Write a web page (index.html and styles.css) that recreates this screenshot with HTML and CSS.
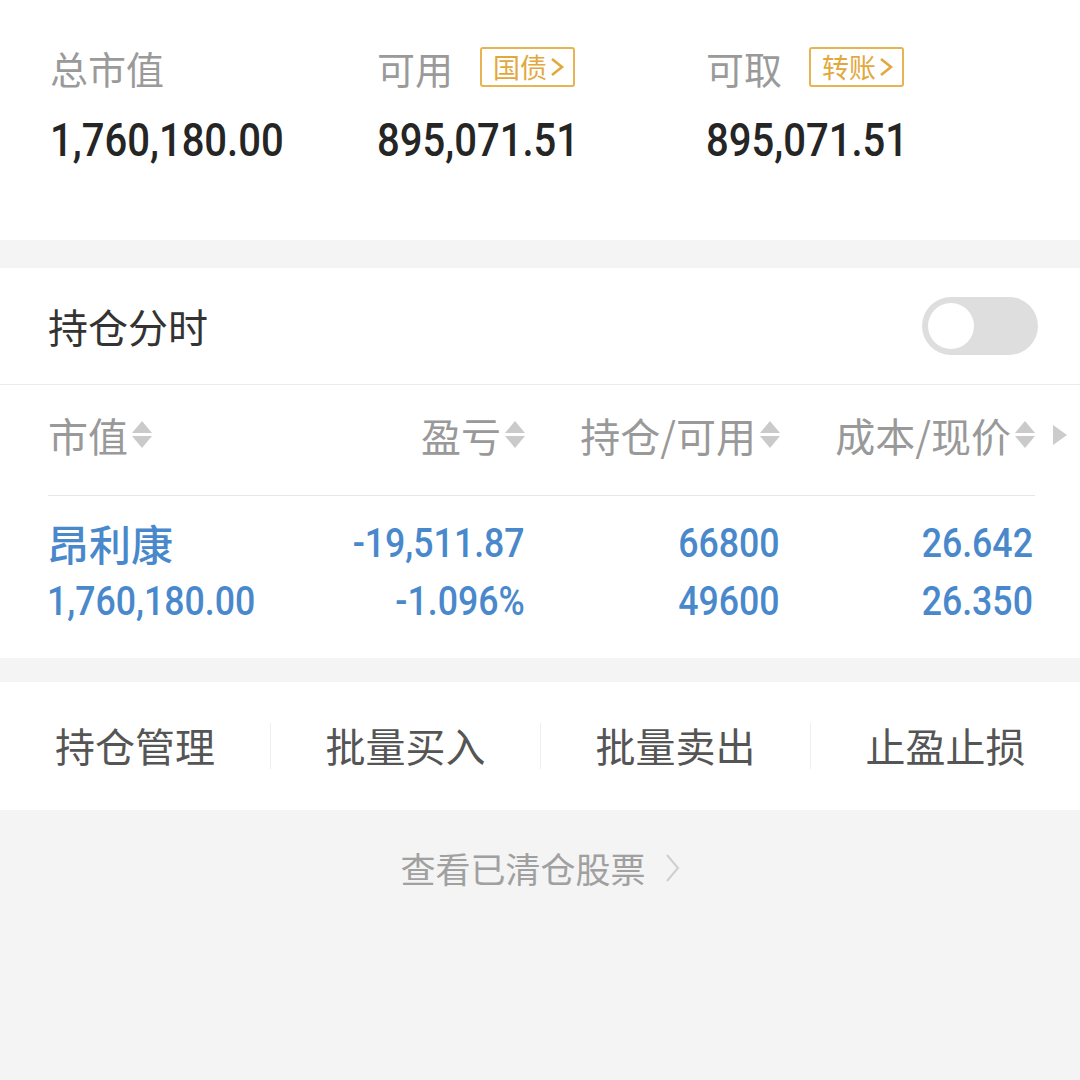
FILE: index.html
```html
<!DOCTYPE html>
<html lang="zh-CN">
<head>
<meta charset="utf-8">
<title>持仓</title>
<link rel="stylesheet" href="styles.css">
</head>
<body>
<div class="page">
  <section class="assets">
    <div class="asset">
      <div class="asset-label"><span>总市值</span></div>
      <div class="asset-value"><span class="num">1,760,180.00</span></div>
    </div>
    <div class="asset">
      <div class="asset-label"><span>可用</span>
        <span class="badge">国债<svg class="badge-arrow" viewBox="0 0 16 22" width="16" height="22"><polyline points="3,3 13,11 3,19" fill="none" stroke="currentColor" stroke-width="2.6" stroke-linejoin="miter"/></svg></span>
      </div>
      <div class="asset-value"><span class="num">895,071.51</span></div>
    </div>
    <div class="asset">
      <div class="asset-label"><span>可取</span>
        <span class="badge">转账<svg class="badge-arrow" viewBox="0 0 16 22" width="16" height="22"><polyline points="3,3 13,11 3,19" fill="none" stroke="currentColor" stroke-width="2.6" stroke-linejoin="miter"/></svg></span>
      </div>
      <div class="asset-value"><span class="num">895,071.51</span></div>
    </div>
  </section>

  <section class="holdings">
    <div class="switch-row">
      <span class="switch-label">持仓分时</span>
      <span class="toggle"><span class="knob"></span></span>
    </div>

    <div class="thead">
      <div class="th th-left">市值<svg class="sort" viewBox="0 0 20 30" width="20" height="30"><polygon points="0,13 10,1 20,13"/><polygon points="0,16 20,16 10,28"/></svg></div>
      <div class="th">盈亏<svg class="sort" viewBox="0 0 20 30" width="20" height="30"><polygon points="0,13 10,1 20,13"/><polygon points="0,16 20,16 10,28"/></svg></div>
      <div class="th">持仓/可用<svg class="sort" viewBox="0 0 20 30" width="20" height="30"><polygon points="0,13 10,1 20,13"/><polygon points="0,16 20,16 10,28"/></svg></div>
      <div class="th">成本/现价<svg class="sort" viewBox="0 0 20 30" width="20" height="30"><polygon points="0,13 10,1 20,13"/><polygon points="0,16 20,16 10,28"/></svg></div>
      <div class="th-more"><svg viewBox="0 0 14 20" width="14" height="20"><polygon points="0,0 14,10 0,20"/></svg></div>
    </div>
    <div class="divider"></div>

    <div class="trow">
      <div class="cell cell-left">
        <div class="stock-name">昂利康</div>
        <div class="line"><span class="num">1,760,180.00</span></div>
      </div>
      <div class="cell">
        <div class="line"><span class="num num-r">-19,511.87</span></div>
        <div class="line"><span class="num num-r">-1.096%</span></div>
      </div>
      <div class="cell">
        <div class="line"><span class="num num-r">66800</span></div>
        <div class="line"><span class="num num-r">49600</span></div>
      </div>
      <div class="cell">
        <div class="line"><span class="num num-r">26.642</span></div>
        <div class="line"><span class="num num-r">26.350</span></div>
      </div>
    </div>
  </section>

  <section class="actions">
    <div class="action">持仓管理</div>
    <div class="action">批量买入</div>
    <div class="action">批量卖出</div>
    <div class="action">止盈止损</div>
  </section>

  <div class="cleared">
    <span>查看已清仓股票</span>
    <svg class="cleared-arrow" viewBox="0 0 16 30" width="16" height="30"><polyline points="3,2 14,15 3,28" fill="none" stroke="#cfcfcf" stroke-width="2"/></svg>
  </div>
</div>
</body>
</html>
```

FILE: styles.css
```css
* { box-sizing: border-box; }

html, body {
  margin: 0;
  padding: 0;
  background: #f4f4f4;
}

body {
  font-family: "Noto Sans CJK SC", "Noto Sans", sans-serif;
  color: #333;
}

.page {
  width: 1080px;
  min-height: 1080px;
  background: #f4f4f4;
}

.num {
  display: inline-block;
  font-family: Roboto, "Liberation Sans", sans-serif;
  transform: scaleX(0.87);
  transform-origin: left center;
  white-space: nowrap;
}

.num-r {
  transform-origin: right center;
}

/* ---------- assets ---------- */
.assets {
  background: #fff;
  height: 240px;
  padding: 43px 0 0 50px;
  display: grid;
  grid-template-columns: 327px 329px 1fr;
}

.asset-label {
  height: 50px;
  display: flex;
  align-items: center;
  font-size: 38px;
  color: #9a9a9a;
  line-height: 50px;
}

.badge {
  display: inline-flex;
  align-items: center;
  margin-left: 27px;
  height: 40px;
  padding: 0 8px 0 11px;
  border: 2px solid #e8b352;
  border-radius: 3px;
  color: #e2a83e;
  font-size: 27px;
  line-height: 36px;
  margin-top: -2px;
}

.badge-arrow {
  margin-left: 2px;
  display: block;
}

.asset-value {
  margin-top: 13px;
  height: 60px;
  line-height: 60px;
  font-size: 46px;
  font-weight: 500;
  color: #252525;
}

/* ---------- holdings ---------- */
.holdings {
  margin-top: 28px;
  background: #fff;
  padding-bottom: 32px;
}

.switch-row {
  height: 117px;
  padding: 0 42px 0 48px;
  display: flex;
  align-items: center;
  justify-content: space-between;
  border-bottom: 1px solid #ececec;
}

.switch-label {
  font-size: 40px;
  color: #333;
}

.toggle {
  width: 116px;
  height: 58px;
  border-radius: 29px;
  background: #dedede;
  display: flex;
  align-items: center;
  padding-left: 6px;
}

.knob {
  width: 46px;
  height: 46px;
  border-radius: 50%;
  background: #fff;
}

.thead {
  height: 110px;
  padding-left: 48px;
  padding-bottom: 10px;
  display: grid;
  grid-template-columns: 277px 200px 255px 255px 45px;
  align-items: center;
  font-size: 40px;
  color: #999;
}

.th {
  display: flex;
  align-items: center;
  justify-content: flex-end;
  white-space: nowrap;
}

.th-left {
  justify-content: flex-start;
}

.sort {
  display: block;
  margin-left: 4px;
  fill: #cacaca;
}

.th-more {
  display: flex;
  justify-content: center;
  padding-left: 4px;
}

.th-more svg {
  display: block;
  fill: #cccccc;
}

.divider {
  height: 1px;
  margin: 0 45px 0 48px;
  background: #e6e6e6;
}

.trow {
  padding: 14px 0 0 47px;
  display: grid;
  grid-template-columns: 278px 200px 255px 253px;
  color: #4a88cc;
}

.cell {
  display: flex;
  flex-direction: column;
  align-items: flex-end;
}

.cell-left {
  align-items: flex-start;
}

.stock-name {
  height: 58px;
  line-height: 66px;
  font-size: 42px;
  font-weight: 500;
  color: #4a88cc;
}

.line {
  height: 58px;
  line-height: 58px;
  font-size: 41px;
  font-weight: 500;
}

/* ---------- actions ---------- */
.actions {
  margin-top: 24px;
  height: 128px;
  background: #fff;
  display: grid;
  grid-template-columns: repeat(4, 1fr);
  align-items: center;
}

.action {
  height: 46px;
  line-height: 44px;
  text-align: center;
  font-size: 40px;
  color: #555;
  border-left: 1px solid #eeeeee;
}

.action:first-child {
  border-left: none;
}

/* ---------- cleared ---------- */
.cleared {
  padding-top: 28px;
  height: 60px;
  box-sizing: content-box;
  display: flex;
  justify-content: center;
  align-items: center;
  font-size: 35px;
  color: #a0a0a0;
  line-height: 60px;
}

.cleared-arrow {
  display: block;
  margin-left: 18px;
}
```
